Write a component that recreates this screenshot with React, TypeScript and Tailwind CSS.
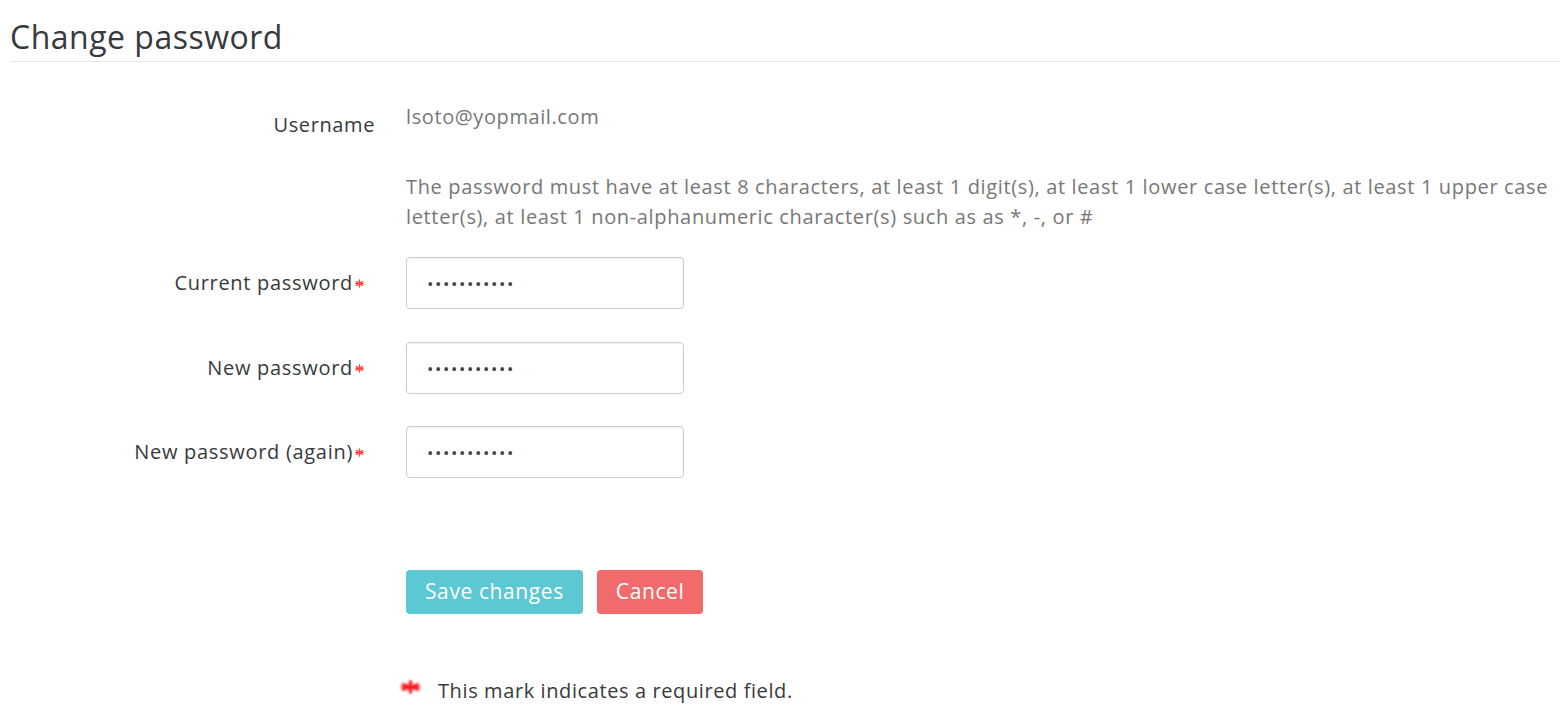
import React from "react";

const Star = ({ className }: { className: string }) => (
  <svg viewBox="0 0 10 10" preserveAspectRatio="none" className={className}>
    <g stroke="#ff1a1a" strokeWidth="1.6" strokeLinecap="round">
      <line x1="5" y1="1" x2="5" y2="9" />
      <line x1="1.5" y1="3" x2="8.5" y2="7" />
      <line x1="1.5" y1="7" x2="8.5" y2="3" />
      <line x1="1" y1="5" x2="9" y2="5" />
    </g>
  </svg>
);

const Row = ({ label, top }: { label: string; top: string }) => (
  <div className={`flex items-center ${top}`}>
    <div className="w-[365px] shrink-0 pr-[11px] flex items-center justify-end text-[20px] text-[#373a3c] tracking-[0.7px]">
      <span>{label}</span>
      <Star className="w-[9px] h-[9px] ml-[2px] blur-[0.5px] opacity-80" />
    </div>
    <div className="pl-[31px]">
      <input
        type="password"
        defaultValue="aaaaaaaaaaa"
        className="w-[278px] h-[52px] rounded-[4px] border border-[#cccccc] px-[20px] text-[17px] tracking-[1.6px] text-[#444] outline-none shadow-[inset_0_1px_1px_rgba(0,0,0,0.05)]"
      />
    </div>
  </div>
);

export default function App() {
  return (
    <div className="min-h-[726px] bg-white pl-[10px] pr-[2px]" style={{ fontFamily: "'Open Sans', sans-serif" }}>
      <h2 className="pt-[17px] pb-[4px] text-[32px] leading-[40px] font-normal tracking-[0.5px] text-[#373a3c] border-b border-[#e5e5e5]">
        Change password
      </h2>
      <div className="flex mt-[40px]">
        <div className="w-[365px] shrink-0 text-right text-[20px] text-[#373a3c] tracking-[0.6px] pt-[8px]">Username</div>
        <div className="pl-[31px] text-[20px] text-[#777777] tracking-[0.6px]">lsoto@yopmail.com</div>
      </div>
      <div className="flex mt-[32px]">
        <div className="w-[365px] shrink-0" />
        <div className="pl-[31px] text-[20px] leading-[30px] text-[#777777] tracking-[0.65px]">
          <div className="whitespace-nowrap">The password must have at least 8 characters, at least 1 digit(s), at least 1 lower case letter(s), at least 1 upper case</div>
          <div className="whitespace-nowrap">letter(s), at least 1 non-alphanumeric character(s) such as as *, -, or #</div>
        </div>
      </div>
      <Row label="Current password" top="mt-[25px]" />
      <Row label="New password" top="mt-[33px]" />
      <Row label="New password (again)" top="mt-[32px]" />
      <div className="flex mt-[92px] pl-[396px] gap-[14px]">
        <button className="h-[44px] px-[19px] rounded-[4px] bg-[#5bc8d4] text-white text-[21px] tracking-[0.6px]">Save changes</button>
        <button className="h-[44px] px-[19px] rounded-[4px] bg-[#f26b6c] text-white text-[21px] tracking-[0.6px]">Cancel</button>
      </div>
      <div className="flex items-center mt-[62px] pl-[390px]">
        <Star className="w-[21px] h-[14px] blur-[1px] -mt-[8px]" />
        <span className="ml-[17px] text-[20px] text-[#373a3c] tracking-[0.6px]">This mark indicates a required field.</span>
      </div>
    </div>
  );
}
